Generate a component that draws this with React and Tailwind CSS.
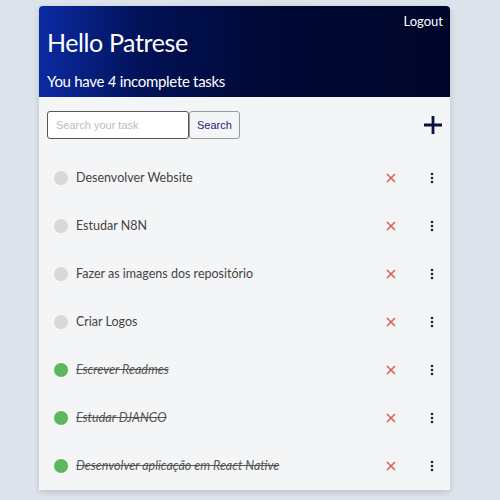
const tasks = [
  { title: "Desenvolver Website", done: false },
  { title: "Estudar N8N", done: false },
  { title: "Fazer as imagens dos repositório", done: false },
  { title: "Criar Logos", done: false },
  { title: "Escrever Readmes", done: true },
  { title: "Estudar DJANGO", done: true },
  { title: "Desenvolver aplicação em React Native", done: true },
];

function TaskRow({ task }) {
  return (
    <li className="h-12 flex items-center pl-[15px] pr-[16px]">
      <span
        className={
          "w-[14px] h-[14px] rounded-full shrink-0 " +
          (task.done ? "bg-[#5cb85c]" : "bg-[#d8d8d8]")
        }
      />
      <span
        className={
          "ml-2 flex-1 text-[12.5px] " +
          (task.done ? "italic line-through text-[#555]" : "text-[#444]")
        }
      >
        {task.title}
      </span>
      <svg width="10" height="10" viewBox="0 0 10 10" className="mr-[34px]">
        <path d="M1 1L9 9M9 1L1 9" stroke="#d9534f" strokeWidth="1.4" />
      </svg>
      <svg width="4" height="12" viewBox="0 0 4 12">
        <circle cx="2" cy="2" r="1.3" fill="#222" />
        <circle cx="2" cy="6" r="1.3" fill="#222" />
        <circle cx="2" cy="10" r="1.3" fill="#222" />
      </svg>
    </li>
  );
}

export default function App() {
  return (
    <div className="min-h-[500px] bg-[#dde3ea] pt-[6px] pl-[39px] font-['Lato',sans-serif]">
      <div className="w-[411px] rounded-t-[4px] overflow-hidden bg-[#f4f5f6] shadow-[0_2px_6px_rgba(0,0,0,0.15)]">
        <div className="h-[91px] bg-[linear-gradient(to_right,#0b2aa3,#021257_25%,#000835_55%,#00062a)] text-white px-2 pt-[8px] relative">
          <button className="absolute right-[7px] top-[6px] text-[13px] font-['Lato',sans-serif]">Logout</button>
          <h1 className="text-[25px] mt-[13px] leading-[30px] tracking-[-0.4px]">Hello Patrese</h1>
          <p className="text-[15px] mt-[14px] leading-5 tracking-[-0.3px]">
            You have <i>4</i> incomplete tasks
          </p>
        </div>
        <div className="pt-[14px] px-2 flex items-center">
          <input
            placeholder="Search your task"
            className="w-[142px] h-[28px] bg-white border border-[#555] rounded-[3px] px-2 text-[11px] font-['Liberation_Sans',sans-serif] placeholder:text-[#bbb] outline-none"
          />
          <button className="h-[28px] px-[7px] border border-[#999] rounded-[3px] bg-[#f4f5f6] text-[#1a237e] text-[11px] font-['Liberation_Sans',sans-serif]">
            Search
          </button>
          <svg width="18" height="18" viewBox="0 0 18 18" className="ml-auto mr-0">
            <path d="M9 0V18M0 9H18" stroke="#0a1040" strokeWidth="2.8" />
          </svg>
        </div>
        <ul className="mt-[15px]">
          {tasks.map((t) => (
            <TaskRow key={t.title} task={t} />
          ))}
        </ul>
      </div>
    </div>
  );
}
